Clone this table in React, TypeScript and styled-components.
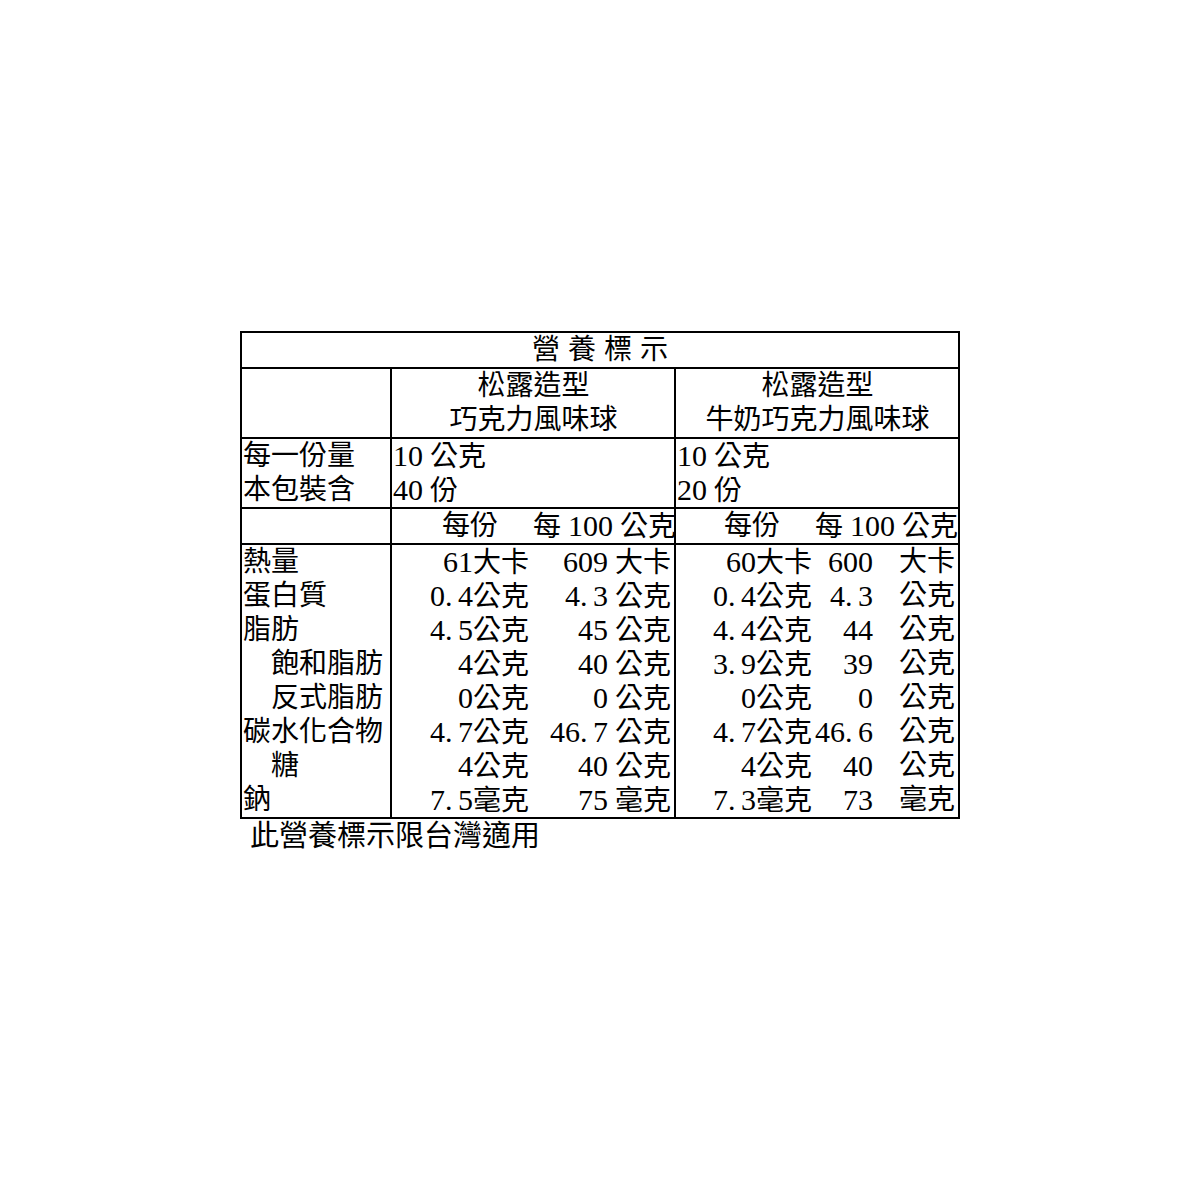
import React from "react";
import styled, { createGlobalStyle } from "styled-components";

const GlobalStyle = createGlobalStyle`
  html, body {
    margin: 0;
    padding: 0;
    background: #fff;
  }
  body {
    font-family: "Liberation Serif", "Noto Sans CJK TC", serif;
    color: #000;
  }
`;

const Wrapper = styled.div`
  width: 720px;
  margin: 331px auto 0;
`;

const Table = styled.div`
  display: grid;
  grid-template-columns: 148px 282px 282px;
  gap: 2px;
  padding: 2px;
  background: #000;
`;

const Cell = styled.div<{ $span?: boolean; $align?: string }>`
  background: #fff;
  font-size: 28px;
  line-height: 34px;
  min-height: 34px;
  text-align: ${(p) => p.$align || "left"};
  grid-column: ${(p) => (p.$span ? "1 / -1" : "auto")};
  white-space: nowrap;
`;

const Title = styled(Cell)`
  letter-spacing: 8px;
  padding-left: 8px;
`;

const Line = styled.div<{ $indent?: boolean }>`
  height: 34px;
  padding-left: ${(p) => (p.$indent ? "29px" : "1px")};
`;

const ValueGrid = styled.div<{ $cols: string }>`
  display: grid;
  grid-template-columns: ${(p) => p.$cols};
  grid-auto-rows: 34px;
`;

const Val = styled.div<{ $pad?: number; $wide?: boolean }>`
  text-align: right;
  padding-right: ${(p) => p.$pad ?? 3}px;
  grid-column: ${(p) => (p.$wide ? "2 / -1" : "auto")};
`;

const Num = styled.span`
  font-size: 30px;
`;

const Dot = styled.span`
  display: inline-block;
  width: 13px;
  text-align: left;
`;

function withNums(text: string) {
  const parts = text.split(/([0-9.]+)/);
  return parts.map((part, i) => {
    if (/^[0-9.]+$/.test(part)) {
      const chunks = part.split(/(\.)/);
      return (
        <Num key={i}>
          {chunks.map((c, j) => (c === "." ? <Dot key={j}>.</Dot> : c))}
        </Num>
      );
    }
    return part;
  });
}

type Row = {
  label: string;
  indent?: boolean;
  p1: [string, string];
  p2: [string, string, string];
};

const rows: Row[] = [
  { label: "熱量", p1: ["61大卡", "609 大卡"], p2: ["60大卡", "600", "大卡"] },
  { label: "蛋白質", p1: ["0.4公克", "4.3 公克"], p2: ["0.4公克", "4.3", "公克"] },
  { label: "脂肪", p1: ["4.5公克", "45 公克"], p2: ["4.4公克", "44", "公克"] },
  { label: "飽和脂肪", indent: true, p1: ["4公克", "40 公克"], p2: ["3.9公克", "39", "公克"] },
  { label: "反式脂肪", indent: true, p1: ["0公克", "0 公克"], p2: ["0公克", "0", "公克"] },
  { label: "碳水化合物", p1: ["4.7公克", "46.7 公克"], p2: ["4.7公克", "46.6", "公克"] },
  { label: "糖", indent: true, p1: ["4公克", "40 公克"], p2: ["4公克", "40", "公克"] },
  { label: "鈉", p1: ["7.5毫克", "75 毫克"], p2: ["7.3毫克", "73", "毫克"] },
];

const P1_COLS = "141px 1fr";
const P2_COLS = "139px 60px 1fr";

const Footer = styled.div`
  font-size: 29px;
  line-height: 34px;
  padding-left: 10px;
`;

export default function App() {
  return (
    <>
      <GlobalStyle />
      <Wrapper>
        <Table>
          <Title $span $align="center">營養標示</Title>

          <Cell />
          <Cell $align="center">
            <Line>松露造型</Line>
            <Line>巧克力風味球</Line>
          </Cell>
          <Cell $align="center">
            <Line>松露造型</Line>
            <Line>牛奶巧克力風味球</Line>
          </Cell>

          <Cell>
            <Line>每一份量</Line>
            <Line>本包裝含</Line>
          </Cell>
          <Cell>
            <Line>{withNums("10 公克")}</Line>
            <Line>{withNums("40 份")}</Line>
          </Cell>
          <Cell>
            <Line>{withNums("10 公克")}</Line>
            <Line>{withNums("20 份")}</Line>
          </Cell>

          <Cell />
          <Cell>
            <ValueGrid $cols={P1_COLS}>
              <Val $pad={35}>每份</Val>
              <Val>{withNums("每 100 公克")}</Val>
            </ValueGrid>
          </Cell>
          <Cell>
            <ValueGrid $cols={P2_COLS}>
              <Val $pad={35}>每份</Val>
              <Val $wide>{withNums("每 100 公克")}</Val>
            </ValueGrid>
          </Cell>

          <Cell>
            {rows.map((r) => (
              <Line key={r.label} $indent={r.indent}>
                {r.label}
              </Line>
            ))}
          </Cell>
          <Cell>
            <ValueGrid $cols={P1_COLS}>
              {rows.map((r) => (
                <React.Fragment key={r.label}>
                  <Val $pad={4}>{withNums(r.p1[0])}</Val>
                  <Val>{withNums(r.p1[1])}</Val>
                </React.Fragment>
              ))}
            </ValueGrid>
          </Cell>
          <Cell>
            <ValueGrid $cols={P2_COLS}>
              {rows.map((r) => (
                <React.Fragment key={r.label}>
                  <Val>{withNums(r.p2[0])}</Val>
                  <Val $pad={2}>{withNums(r.p2[1])}</Val>
                  <Val>{withNums(r.p2[2])}</Val>
                </React.Fragment>
              ))}
            </ValueGrid>
          </Cell>
        </Table>
        <Footer>此營養標示限台灣適用</Footer>
      </Wrapper>
    </>
  );
}
